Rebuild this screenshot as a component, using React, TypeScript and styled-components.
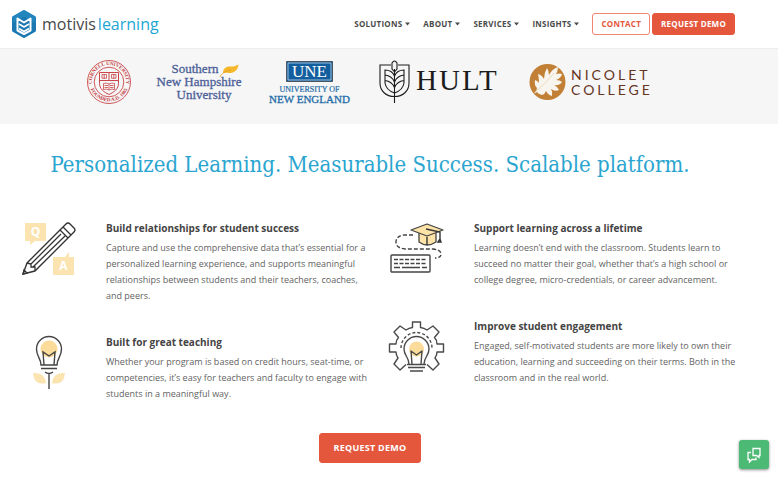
import React from "react";
import styled, { createGlobalStyle } from "styled-components";

const GlobalStyle = createGlobalStyle`
  * { box-sizing: border-box; }
  body { margin: 0; background: #fff; font-family: "Open Sans", "Noto Sans", sans-serif; color: #4b4b4b; }
  svg { display: block; flex: none; overflow: visible; }
`;

const Header = styled.header`
  display: flex;
  align-items: center;
  justify-content: space-between;
  height: 49px;
  padding: 0 43px 0 11px;
  border-bottom: 1px solid #ededed;
`;

const Brand = styled.a`
  display: flex;
  align-items: center;
  gap: 5px;
  color: #484848;
  font-size: 16px;
  line-height: 24px;
  text-decoration: none;
`;

const BrandName = styled.span`
  display: flex;
  gap: 2px;
`;

const BrandAccent = styled.span`
  color: #1da7d4;
`;

const Nav = styled.nav`
  display: flex;
  align-items: center;
  gap: 13px;
`;

const NavItem = styled.button`
  display: flex;
  align-items: center;
  gap: 3px;
  padding: 0;
  border: 0;
  background: none;
  color: #4b4b4b;
  font: 700 8px/12px "Open Sans", sans-serif;
  letter-spacing: 0.03em;
`;

const NavActions = styled.div`
  display: flex;
  gap: 2px;
`;

const Action = styled.a<{ $filled?: boolean; $large?: boolean }>`
  display: inline-block;
  padding: ${(p) => (p.$large ? "8px 13px" : "4px 8px")};
  border: 1px solid ${(p) => (p.$filled ? "#e4573d" : "#ee8471")};
  border-radius: 3px;
  background: ${(p) => (p.$filled ? "#e4573d" : "#fff")};
  color: ${(p) => (p.$filled ? "#fff" : "#e4573d")};
  font-size: ${(p) => (p.$large ? "9px" : "8px")};
  font-weight: 700;
  line-height: 12px;
  letter-spacing: 0.03em;
  text-decoration: none;
  white-space: nowrap;
`;

const Partners = styled.section`
  display: flex;
  align-items: flex-start;
  justify-content: center;
  gap: 28px;
  height: 75px;
  padding: 11px 38px 0 0;
  background: #f6f6f6;
`;

const Main = styled.main`
  padding: 24px 38px 24px 0;
`;

const Heading = styled.h1`
  margin: 0;
  color: #2aa5d0;
  font: 400 22px/34px "Roboto Slab", "DejaVu Serif Condensed", "DejaVu Serif", serif;
  text-align: center;
`;

const Features = styled.div`
  display: grid;
  grid-template-columns: 1fr 1fr;
  gap: 16px;
  padding: 38px 0 0 20px;
`;

const Column = styled.div`
  display: flex;
  flex-direction: column;
  gap: 30px;
`;

const Feature = styled.article`
  display: grid;
  grid-template-columns: 58px 1fr;
  gap: 28px;
`;

const FeatureIcon = styled.div`
  height: 0;
`;

const FeatureTitle = styled.h2`
  margin: 0 0 4px;
  color: #444;
  font-size: 10px;
  font-weight: 700;
  line-height: 16px;
`;

const FeatureText = styled.p`
  margin: 0;
  color: #636363;
  font-size: 9px;
  line-height: 16px;
`;

const Center = styled.div`
  display: flex;
  justify-content: center;
  padding-top: 31px;
`;

const ChatButton = styled.button`
  position: fixed;
  right: 9px;
  bottom: 18px;
  display: grid;
  place-items: center;
  width: 30px;
  height: 29px;
  padding: 0;
  border: 0;
  border-radius: 3px;
  background: #4cb974;
  box-shadow: 0 1px 3px rgba(0, 0, 0, 0.45);
`;

const BrandMark = () => (
  <svg width="26" height="30" viewBox="0 0 26 30" aria-hidden="true">
    <path d="M13 2.500 23.500 8.500v13L13 27.500 2.500 21.500v-13z" fill="#1d78b2" stroke="#1d78b2" strokeWidth="3" strokeLinejoin="round" />
    <path d="M13 1 1.500 7.800v6L13 8l11.500 6v-6z" fill="#2b95cb" opacity=".45" />
    <g fill="none" stroke="#fff" strokeWidth="2" strokeLinejoin="round">
      <path d="M6.500 21.500V9.500l6.500 4 6.500-4v12L13 25z" />
      <path d="m8 15 5 3 5-3M8 19.500l5 3 5-3" strokeWidth="1.500" />
    </g>
  </svg>
);

const Caret = () => (
  <svg width="5" height="4" viewBox="0 0 5 4" aria-hidden="true">
    <path d="M0 .5h5L2.500 3.500z" fill="#4b4b4b" />
  </svg>
);

const CornellLogo = () => (
  <svg width="44" height="44" viewBox="0 0 44 44" role="img" aria-label="Cornell University">
    <defs>
      <path id="seal-top" d="M6 28.500a17.200 17.200 0 1 1 32 0" />
      <path id="seal-bottom" d="M2 24a20.200 20.200 0 0 0 40 0" />
    </defs>
    <g fill="none" stroke="#c9474b">
      <circle cx="22" cy="22" r="21.500" strokeWidth=".9" />
      <circle cx="22" cy="22" r="14.800" strokeWidth=".9" />
      <path d="M12.500 12.500h19v11c0 5-4 8.500-9.500 11-5.500-2.500-9.500-6-9.500-11z" />
      <path d="M12.500 20.500h19M22 12.500v8" />
      <path d="M15 14.500h4.500v3.700H15zM24.500 14.500H29v3.700h-4.500zM17.200 14v5M26.800 14v5" strokeWidth=".8" />
      <path d="M16.500 23.500q3-1 5.500.5 2.500-1.500 5.500-.5v6q-3-1-5.500.5-2.500-1.500-5.500-.5zM22 24v6M17.500 25.500h3.500M17.500 27.500h3.500M23 25.500h3.500M23 27.500h3.500" strokeWidth=".8" />
    </g>
    <g fill="#c43b40" fontFamily="Liberation Serif, serif" fontSize="5" fontWeight="700">
      <text><textPath href="#seal-top" startOffset="50%" textAnchor="middle">CORNELL UNIVERSITY</textPath></text>
      <text><textPath href="#seal-bottom" startOffset="50%" textAnchor="middle">FOUNDED A.D. 1865</textPath></text>
    </g>
  </svg>
);

const SouthernLogo = () => (
  <svg width="81" height="46" viewBox="0 0 81 46" role="img" aria-label="Southern New Hampshire University">
    <g fill="#4c5f98" stroke="#4c5f98" strokeWidth=".3" fontFamily="Liberation Serif, serif" fontSize="13" textAnchor="middle">
      <text x="36" y="13">Southern</text>
      <text x="40" y="26">New Hampshire</text>
      <text x="45" y="39">University</text>
    </g>
    <path d="M64 13c0-6 5-7 8-6.500 3 .5 5-1 7.500-2-.5 6-5 9-10 8.500-2.500-.3-4 0-5.500 0z" fill="#f5b82c" />
    <path d="M61 17c1-3 5-6 11-7" fill="none" stroke="#e29b20" strokeWidth=".8" />
  </svg>
);

const UneLogo = () => (
  <svg width="83" height="44" viewBox="0 0 83 44" role="img" aria-label="University of New England">
    <path d="M18.500 1.500h46v20h-46z" fill="#125e9e" stroke="#49545f" />
    <path d="M20 3h43v17H20z" fill="none" stroke="#d9e5ee" strokeWidth=".7" />
    <g fontFamily="Liberation Serif, serif" textAnchor="middle">
      <text x="41.500" y="17" fill="#fff" fontSize="17">UNE</text>
      <text x="41.500" y="32" fill="#246ca8" stroke="#246ca8" strokeWidth=".2" fontSize="8">UNIVERSITY OF</text>
      <text x="41.500" y="43" fill="#246ca8" stroke="#246ca8" strokeWidth=".3" fontSize="11">NEW ENGLAND</text>
    </g>
  </svg>
);

const HultLogo = () => (
  <svg width="122" height="44" viewBox="0 0 122 44" role="img" aria-label="Hult">
    <g fill="none" stroke="#1c1c1c" strokeWidth="1.100">
      <path d="M12 5H1v18c0 8 6 13.500 14.500 13.500S30 31 30 23V5H19" />
      <path d="M15.500 43V9M13 9V3q2.500-4 5 0v6l-2.500 3z" />
      <path d="M6 10v13q1 7 9.500 10Q24 30 25 23V10q-7 0-9.500 6Q13 10 6 10zM6 15q7 1 9.500 7 2.500-6 9.500-7M6 20.500q7 1 9.500 7 2.500-6 9.500-7" />
    </g>
    <text x="37" y="30" fill="#1c1c1c" fontFamily="Liberation Serif, serif" fontSize="29" letterSpacing="2">HULT</text>
  </svg>
);

const NicoletLogo = () => (
  <svg width="124" height="44" viewBox="0 0 124 44" role="img" aria-label="Nicolet College">
    <circle cx="18.500" cy="22" r="18" fill="#c28036" />
    <path d="M5 33Q8 31 8 28 5 25 6 20q3 1 4 3 0-5-1-9 4 1 6 5 0-6 3-11 2 3 2 7 3-6 9-8 0 4-2 7 3-1 6 0-1 4-6 6 4 0 6 2-3 4-8 3 4 2 5 5-4 2-8-1 2 3 1 7-4-1-6-5-1 3-4 4-4-1-5-3-1 1-3 1z" fill="#f8f5ef" />
    <path d="M5 33Q16 24 25 13" fill="none" stroke="#e0c49b" strokeWidth=".6" />
    <g fill="#65351f" fontFamily="Lato, sans-serif" fontSize="14" letterSpacing="3">
      <text x="42" y="20">NICOLET</text>
      <text x="42" y="35">COLLEGE</text>
    </g>
  </svg>
);

const PencilIcon = () => (
  <svg width="58" height="58" viewBox="0 0 58 58" aria-hidden="true">
    <path d="M5 3h21v18H15l-5 4v-4H5zM33 37h12l4-5v5h5v18H33z" fill="#fbe4b0" />
    <g fill="#fff" fontFamily="Open Sans, sans-serif" fontSize="12" fontWeight="700" textAnchor="middle">
      <text x="15.500" y="16">Q</text>
      <text x="43.500" y="50">A</text>
    </g>
    <path d="M3 54 7 43 46 4q2-2 4 0l4 4q2 2 0 4L15 51z" fill="#fff" stroke="#333" strokeWidth="1.400" strokeLinejoin="round" />
    <path d="m7 43 4 1 0 3 4 0 0 4M11 44 41 14M13 47l32-31M40 10l8 8M43 7l8 8M3 54l4-1-3-3z" fill="none" stroke="#333" strokeWidth="1.300" />
  </svg>
);

const PlantIcon = () => (
  <svg width="58" height="58" viewBox="0 0 58 58" aria-hidden="true">
    <circle cx="29" cy="15" r="8.500" fill="#fbdc9a" />
    <path d="M13 39q12-1 13 10-12 3-13-10zM45 39q-12-1-13 10 12 3 13-10z" fill="#fbe4b0" />
    <path d="M21 31c0-7-4.500-8-4.500-16a12.500 12.500 0 0 1 25 0c0 8-4.500 9-4.500 16zM24 31l-1-13 6 4 6-4-1 13M21 34.500h16M25 38q4 3 8 0M29 39v16" fill="none" stroke="#444" strokeWidth="1.400" />
  </svg>
);

const CapIcon = () => (
  <svg width="58" height="58" viewBox="0 0 58 58" aria-hidden="true">
    <g fill="#fde3a8" stroke="#444" strokeWidth="1.300" strokeLinejoin="round">
      <path d="M31 13v9q8 6 17 0v-9" />
      <path d="m23 10 16-6 16 6-16 6z" />
    </g>
    <path d="m38 9 14 3v8M50 22l2-3 1 3zM39 17v8" fill="none" stroke="#333" strokeWidth="1.400" />
    <path d="M25 15h-9q-8 1-8 7t9 7h28q8 1 8 5t-6 4" fill="none" stroke="#444" strokeWidth="1.400" strokeDasharray="4 2" />
    <rect x="3" y="35" width="39" height="17" rx="1" fill="#fff" stroke="#444" strokeWidth="1.400" />
    <path d="M6 39.500h33M6 43.500h33" stroke="#444" strokeWidth="1.400" strokeDasharray="4 1.500" />
    <path d="M6 47.500h6M14 47.500h18M34 47.500h5" stroke="#444" strokeWidth="1.400" />
  </svg>
);

const GearIcon = () => (
  <svg width="58" height="58" viewBox="0 0 58 58" aria-hidden="true">
    <circle cx="28.500" cy="31" r="7.500" fill="#fbdc9a" />
    <g fill="none" stroke="#4a4a4a" strokeWidth="1.400" strokeLinejoin="round">
      <path d="M18 46.500 12 52l-6-6 4-6q-2-3-2-6H1.500v-8H8q0-4 2.500-6.500L6 14l6-6 6 4q3-2 6.500-2.500V4h8v5.500Q36 10 39 12l6-4 6 6-4.500 5.500Q49 22 49 26h6.500v8H49q0 3-2 6l4 6-6 6-6-5.500" />
      <path d="M21 46c0-7-5-8-5-15a12.500 12.500 0 0 1 25 0c0 7-5 8-5 15M24 46l-1-13 5.500 4 5.500-4-1 13M19 46.500h19M20 49.500h17M22 53h13" />
      <path d="M13 30a15.500 15.500 0 0 1 31 0" strokeDasharray="3 2" />
    </g>
  </svg>
);

const ChatIcon = () => (
  <svg width="16" height="16" viewBox="0 0 16 16" fill="none" stroke="#fff" strokeWidth="1.300" aria-hidden="true">
    <path d="M7 1.500h7v7h-1v2l-2.500-2H7z" />
    <path d="M5 5.500H2v7h1.500v2.500L6 12.500h4v-2" />
  </svg>
);

const menu = ["SOLUTIONS", "ABOUT", "SERVICES", "INSIGHTS"];

const columns = [
  [
    {
      Icon: PencilIcon,
      title: "Build relationships for student success",
      text: "Capture and use the comprehensive data that’s essential for a personalized learning experience, and supports meaningful relationships between students and their teachers, coaches, and peers.",
    },
    {
      Icon: PlantIcon,
      title: "Built for great teaching",
      text: "Whether your program is based on credit hours, seat-time, or competencies, it’s easy for teachers and faculty to engage with students in a meaningful way.",
    },
  ],
  [
    {
      Icon: CapIcon,
      title: "Support learning across a lifetime",
      text: "Learning doesn’t end with the classroom. Students learn to succeed no matter their goal, whether that’s a high school or college degree, micro-credentials, or career advancement.",
    },
    {
      Icon: GearIcon,
      title: "Improve student engagement",
      text: "Engaged, self-motivated students are more likely to own their education, learning and succeeding on their terms. Both in the classroom and in the real world.",
    },
  ],
];

export default function App() {
  return (
    <>
      <GlobalStyle />
      <Header>
        <Brand href="#">
          <BrandMark />
          <BrandName>
            <span>motivis</span>
            <BrandAccent>learning</BrandAccent>
          </BrandName>
        </Brand>
        <Nav>
          {menu.map((label) => (
            <NavItem key={label} type="button">
              {label}
              <Caret />
            </NavItem>
          ))}
          <NavActions>
            <Action href="#">CONTACT</Action>
            <Action href="#" $filled>REQUEST DEMO</Action>
          </NavActions>
        </Nav>
      </Header>
      <Partners>
        <CornellLogo />
        <SouthernLogo />
        <UneLogo />
        <HultLogo />
        <NicoletLogo />
      </Partners>
      <Main>
        <Heading>Personalized Learning. Measurable Success. Scalable platform.</Heading>
        <Features>
          {columns.map((items, i) => (
            <Column key={i}>
              {items.map(({ Icon, title, text }) => (
                <Feature key={title}>
                  <FeatureIcon><Icon /></FeatureIcon>
                  <div>
                    <FeatureTitle>{title}</FeatureTitle>
                    <FeatureText>{text}</FeatureText>
                  </div>
                </Feature>
              ))}
            </Column>
          ))}
        </Features>
        <Center>
          <Action href="#" $filled $large>REQUEST DEMO</Action>
        </Center>
      </Main>
      <ChatButton type="button" aria-label="Open chat">
        <ChatIcon />
      </ChatButton>
    </>
  );
}
